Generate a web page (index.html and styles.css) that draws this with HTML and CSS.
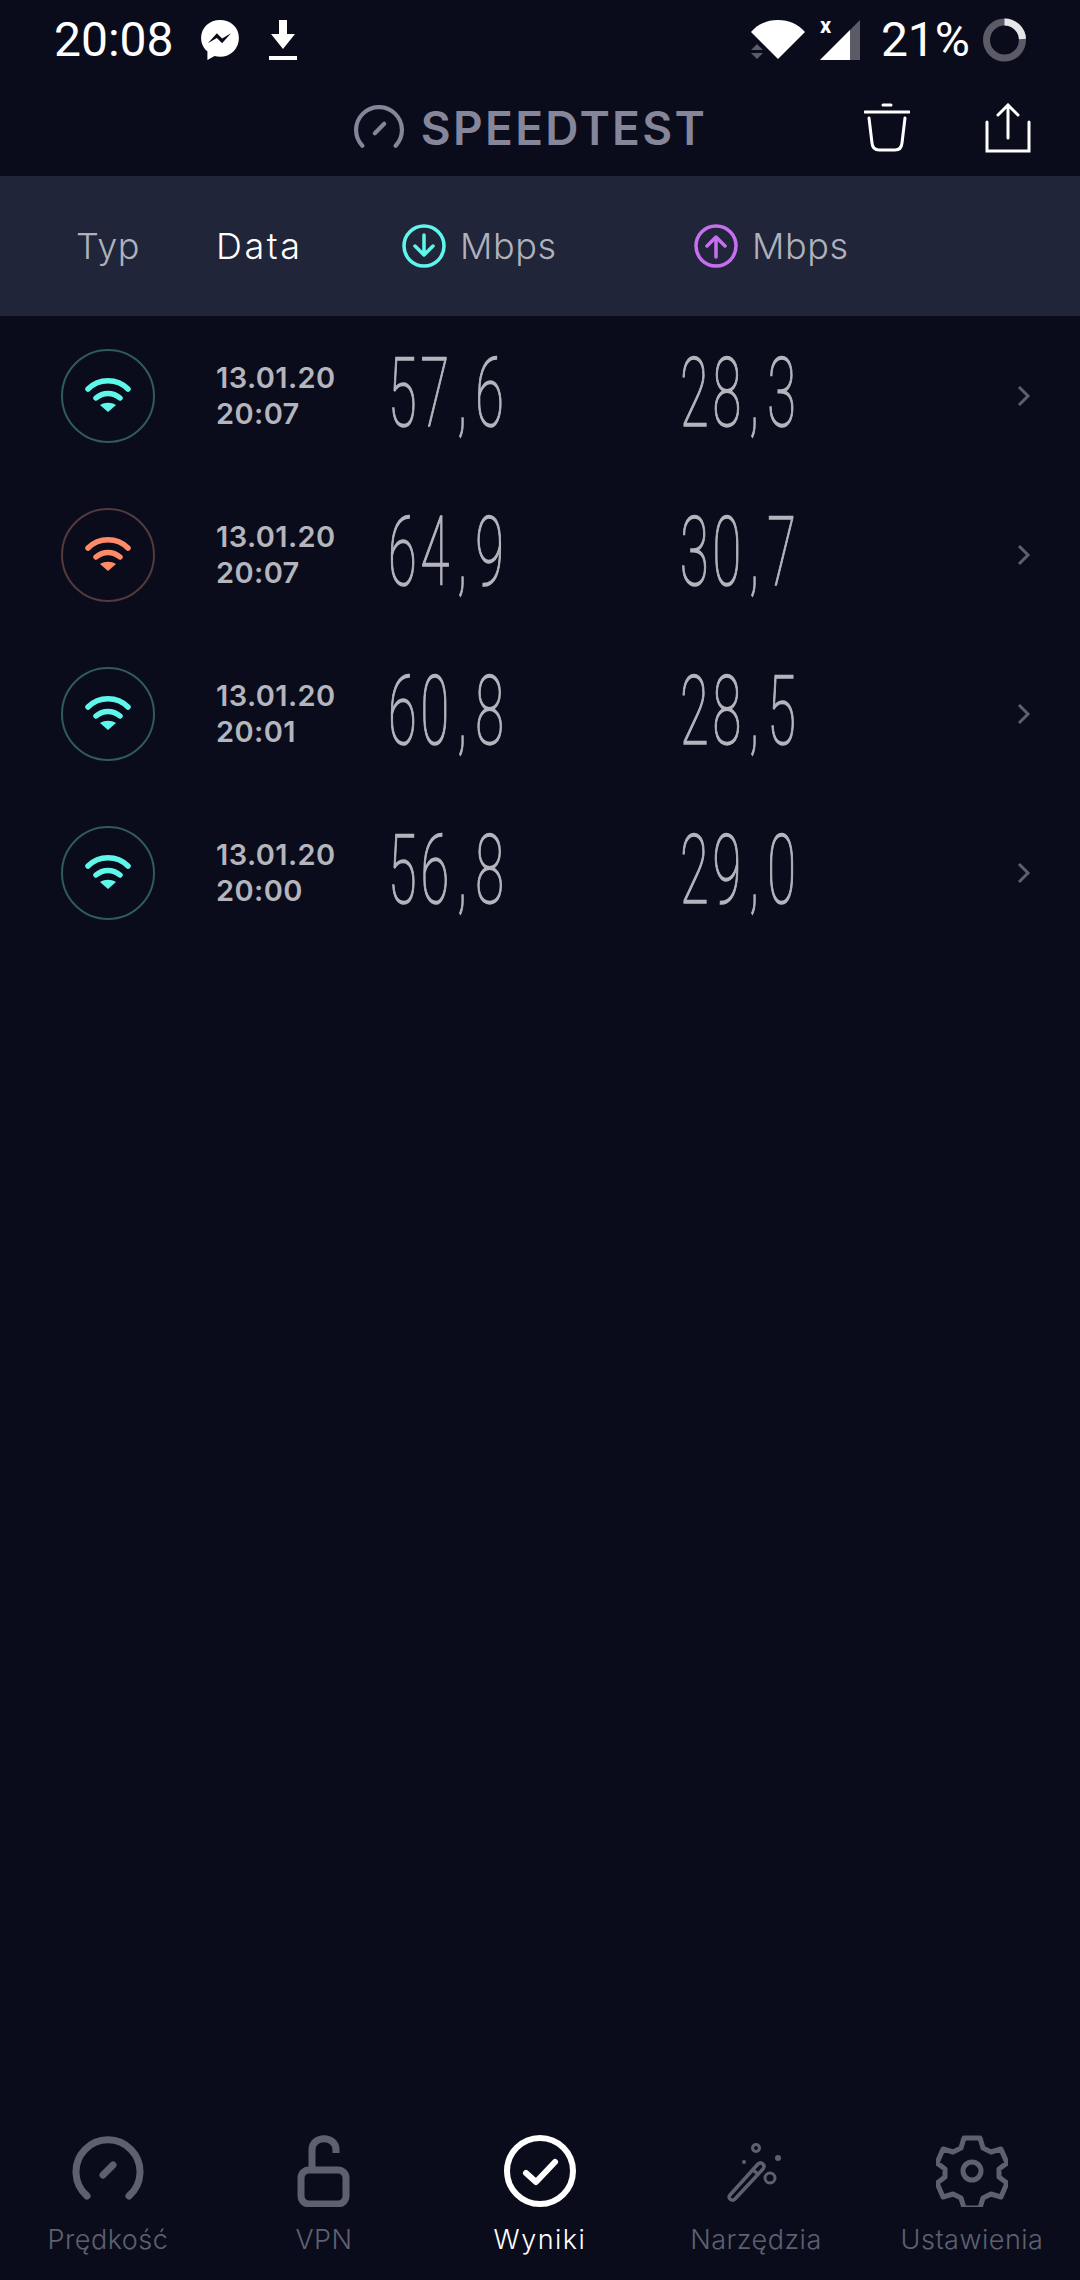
FILE: index.html
```html
<!DOCTYPE html>
<html lang="pl">
<head>
  <meta charset="UTF-8" />
  <meta name="viewport" content="width=device-width, initial-scale=1" />
  <title>Speedtest - Wyniki</title>
  <link rel="stylesheet" href="styles.css">
</head>
<body>
  <div class="app">
    <div class="statusbar">
      <div class="status-left">
        <span class="clock">20:08</span>
        <svg class="ic-msg" viewBox="0 0 38 40"><path d="M19 1C9 1 1 8.300 1 18c0 5.200 2.300 9.700 6 12.800V39l6.800-3.700c1.600.5 3.400.7 5.200.7 10 0 18-7.800 18-18S29 1 19 1z" fill="#fff"/><path d="M7.500 23l8.500-9.500 5 5 8.500-5-8.500 9.500-5-5z" fill="#0a0c1c"/></svg>
        <svg class="ic-dl" viewBox="0 0 28 40"><path d="M10 0h8v14h8L14 29 2 14h8z" fill="#fff"/><rect y="36" width="28" height="4" fill="#fff"/></svg>
      </div>
      <div class="status-right">
        <svg class="ic-wifi" viewBox="0 0 54 42"><path d="M27 40L0 13C7 5 16 1 27 1s20 4 27 12z" fill="#fff"/><path d="M0 31l6-6 6 6zM0 34h12l-6 6z" fill="#5a5b66"/></svg>
        <div class="sig">
          <span class="sig-x">x</span>
          <svg class="ic-sig" viewBox="0 0 40 40"><path d="M40 0v40H0z" fill="#5a5b66"/><path d="M30 10v30H0z" fill="#fff"/></svg>
        </div>
        <span class="batt">21%</span>
        <svg class="ic-batt" viewBox="0 0 44 46"><circle cx="22" cy="23" r="18" fill="none" stroke="#5a5b66" stroke-width="7"/><path d="M22 5a18 18 0 0 1 18 17" fill="none" stroke="#fff" stroke-width="7" opacity=".85"/></svg>
      </div>
    </div>

    <header class="topbar">
      <div class="brand">
        <svg class="ic-gauge" viewBox="0 0 48 44"><path d="M8 39A22 22 0 1 1 40 39" fill="none" stroke="#858699" stroke-width="4" stroke-linecap="round"/><path d="M20 27l9-9" fill="none" stroke="#858699" stroke-width="4" stroke-linecap="round"/></svg>
        <span>SPEEDTEST</span>
      </div>
      <div class="top-actions">
        <svg class="ic-trash" viewBox="0 0 46 50"><path d="M1 9h44M19 2h8" fill="none" stroke="#fff" stroke-width="3" stroke-linecap="round"/><path d="M5 15l3 25c.5 5 3 7 7 7h16c4 0 6.500-2 7-7l3-25" fill="none" stroke="#fff" stroke-width="3" stroke-linecap="round"/></svg>
        <svg class="ic-share" viewBox="0 0 46 50"><path d="M2 19v29h42V19M23 35V3M13 12l10-10 10 10" fill="none" stroke="#fff" stroke-width="3" stroke-linecap="round"/></svg>
      </div>
    </header>

    <div class="thead">
      <span class="col-type">Typ</span>
      <span class="col-date">Data</span>
      <span class="col-speed"><svg class="ic-dir" viewBox="0 0 44 44"><circle cx="22" cy="22" r="20" fill="none" stroke="#5ef7ea" stroke-width="3.500"/><path d="M22 11v20M13 22l9 9 9-9" fill="none" stroke="#5ef7ea" stroke-width="3.500" stroke-linecap="round" stroke-linejoin="round"/></svg>Mbps</span>
      <span class="col-speed"><svg class="ic-dir" viewBox="0 0 44 44"><circle cx="22" cy="22" r="20" fill="none" stroke="#c76ff0" stroke-width="3.500"/><path d="M22 33V13M13 22l9-9 9 9" fill="none" stroke="#c76ff0" stroke-width="3.500" stroke-linecap="round" stroke-linejoin="round"/></svg>Mbps</span>
    </div>

    <main class="rows">
      <div class="row">
        <div class="type-cell"><div class="type-ring ring-teal"><svg class="ic-signal" viewBox="0 0 46 36"><path d="M3 12C14 1 32 1 43 12M11 21c7-6 17-6 24 0" fill="none" stroke="currentColor" stroke-width="5.500" stroke-linecap="round"/><path d="M23 35l-8-7c5-3 11-3 16 0z" fill="currentColor"/></svg></div></div>
        <div class="date-cell">13.01.20<br>20:07</div>
        <div class="num-cell"><span class="num">57<span class="comma">,</span>6</span></div>
        <div class="num-cell"><span class="num">28<span class="comma">,</span>3</span></div>
        <svg class="chev" viewBox="0 0 14 22"><path d="M2 2l9 9-9 9" fill="none" stroke="#5d5f70" stroke-width="3"/></svg>
      </div>
      <div class="row">
        <div class="type-cell"><div class="type-ring ring-orange"><svg class="ic-signal" viewBox="0 0 46 36"><path d="M3 12C14 1 32 1 43 12M11 21c7-6 17-6 24 0" fill="none" stroke="currentColor" stroke-width="5.500" stroke-linecap="round"/><path d="M23 35l-8-7c5-3 11-3 16 0z" fill="currentColor"/></svg></div></div>
        <div class="date-cell">13.01.20<br>20:07</div>
        <div class="num-cell"><span class="num">64<span class="comma">,</span>9</span></div>
        <div class="num-cell"><span class="num">30<span class="comma">,</span>7</span></div>
        <svg class="chev" viewBox="0 0 14 22"><path d="M2 2l9 9-9 9" fill="none" stroke="#5d5f70" stroke-width="3"/></svg>
      </div>
      <div class="row">
        <div class="type-cell"><div class="type-ring ring-teal"><svg class="ic-signal" viewBox="0 0 46 36"><path d="M3 12C14 1 32 1 43 12M11 21c7-6 17-6 24 0" fill="none" stroke="currentColor" stroke-width="5.500" stroke-linecap="round"/><path d="M23 35l-8-7c5-3 11-3 16 0z" fill="currentColor"/></svg></div></div>
        <div class="date-cell">13.01.20<br>20:01</div>
        <div class="num-cell"><span class="num">60<span class="comma">,</span>8</span></div>
        <div class="num-cell"><span class="num">28<span class="comma">,</span>5</span></div>
        <svg class="chev" viewBox="0 0 14 22"><path d="M2 2l9 9-9 9" fill="none" stroke="#5d5f70" stroke-width="3"/></svg>
      </div>
      <div class="row">
        <div class="type-cell"><div class="type-ring ring-teal"><svg class="ic-signal" viewBox="0 0 46 36"><path d="M3 12C14 1 32 1 43 12M11 21c7-6 17-6 24 0" fill="none" stroke="currentColor" stroke-width="5.500" stroke-linecap="round"/><path d="M23 35l-8-7c5-3 11-3 16 0z" fill="currentColor"/></svg></div></div>
        <div class="date-cell">13.01.20<br>20:00</div>
        <div class="num-cell"><span class="num">56<span class="comma">,</span>8</span></div>
        <div class="num-cell"><span class="num">29<span class="comma">,</span>0</span></div>
        <svg class="chev" viewBox="0 0 14 22"><path d="M2 2l9 9-9 9" fill="none" stroke="#5d5f70" stroke-width="3"/></svg>
      </div>
    </main>

    <nav class="tabbar">
      <div class="tab">
        <svg class="tab-icon" viewBox="0 0 72 72"><path d="M15 61A32 32 0 1 1 57 61" fill="none" stroke="currentColor" stroke-width="7" stroke-linecap="round"/><path d="M31 40l10-10" fill="none" stroke="currentColor" stroke-width="7" stroke-linecap="round"/></svg>
        <span>Prędkość</span>
      </div>
      <div class="tab">
        <svg class="tab-icon" viewBox="0 0 72 72"><rect x="13" y="35" width="45" height="34" rx="8" fill="none" stroke="currentColor" stroke-width="7"/><path d="M24 35V15C24 0 48 0 48 15v3" fill="none" stroke="currentColor" stroke-width="7"/></svg>
        <span>VPN</span>
      </div>
      <div class="tab tab-active">
        <svg class="tab-icon" viewBox="0 0 72 72"><circle cx="36" cy="36" r="33" fill="none" stroke="currentColor" stroke-width="6"/><path d="M22 38l10 9 19-20" fill="none" stroke="currentColor" stroke-width="6" stroke-linecap="round" stroke-linejoin="round"/></svg>
        <span>Wyniki</span>
      </div>
      <div class="tab">
        <svg class="tab-icon" viewBox="0 0 72 72"><path d="M10 60l28-31c3-3 8 1 5 5L15 64c-3 3-8-1-5-4zM33 35l5 4" fill="none" stroke="currentColor" stroke-width="3.500" stroke-linejoin="round"/><circle cx="36" cy="13" r="3.500" fill="none" stroke="currentColor" stroke-width="3"/><circle cx="50" cy="43" r="5" fill="none" stroke="currentColor" stroke-width="3"/><circle cx="58" cy="23" r="3" fill="currentColor"/><circle cx="24" cy="27" r="2" fill="currentColor"/></svg>
        <span>Narzędzia</span>
      </div>
      <div class="tab">
        <svg class="tab-icon" viewBox="0 0 72 72"><path d="M28 3h16l3 10 8 4 10-3 6 14-8 6v8l8 6-6 14-10-3-8 4-3 10H28l-3-10-8-4-10 3-6-14 8-6v-8l-8-6 6-14 10 3 8-4z" fill="none" stroke="currentColor" stroke-width="5" stroke-linejoin="round"/><circle cx="36" cy="36" r="9" fill="none" stroke="currentColor" stroke-width="5"/></svg>
        <span>Ustawienia</span>
      </div>
    </nav>
  </div>
</body>
</html>
```

FILE: styles.css
```css
* {
  box-sizing: border-box;
}
html, body {
  margin: 0;
  padding: 0;
}
body {
  font-family: Inter, "Open Sans", sans-serif;
  background-color: #0a0c1c;
  color: #fff;
}
svg {
  display: block;
  flex: none;
}
.app {
  width: 1080px;
  height: 2280px;
  display: flex;
  flex-direction: column;
  overflow: hidden;
}

/* status bar */
.statusbar {
  height: 80px;
  display: flex;
  justify-content: space-between;
  align-items: center;
  padding: 0 53px 0 54px;
}
.status-left, .status-right {
  display: flex;
  align-items: center;
}
.clock, .batt {
  font-family: Roboto, sans-serif;
  font-size: 48px;
  line-height: 1;
}
.ic-msg {
  width: 40px;
  height: 42px;
  margin-left: 26px;
}
.ic-dl {
  width: 30px;
  height: 40px;
  margin-left: 28px;
}
.ic-wifi {
  width: 54px;
  height: 42px;
}
.sig {
  width: 40px;
  height: 40px;
  margin-left: 15px;
  position: relative;
}
.sig-x {
  position: absolute;
  left: 0;
  top: -7px;
  font-family: Roboto, sans-serif;
  font-size: 22px;
  font-weight: 700;
}
.ic-sig {
  width: 40px;
  height: 40px;
}
.batt {
  margin-left: 21px;
}
.ic-batt {
  width: 45px;
  height: 46px;
  margin-left: 12px;
}

/* top bar */
.topbar {
  height: 96px;
  position: relative;
  display: flex;
  justify-content: center;
  align-items: center;
}
.brand {
  display: flex;
  align-items: center;
  gap: 17px;
  margin-right: 19px;
  color: #858699;
  font-size: 46px;
  font-weight: 600;
  letter-spacing: 2.300px;
}
.ic-gauge {
  width: 50px;
  height: 46px;
}
.top-actions {
  position: absolute;
  right: 49px;
  top: 23px;
  display: flex;
  gap: 75px;
}
.ic-trash, .ic-share {
  width: 46px;
  height: 50px;
}

/* table head */
.thead {
  height: 140px;
  background-color: #20253a;
  display: grid;
  grid-template-columns: 216px 186px 292px 292px;
  align-items: center;
  font-size: 36px;
  font-weight: 300;
  letter-spacing: 0.6px;
  color: #b0b1bb;
}
.col-type {
  padding-left: 76px;
}
.col-date {
  color: #fff;
  letter-spacing: 2.500px;
}
.col-speed {
  display: flex;
  align-items: center;
  gap: 14px;
}
.ic-dir {
  width: 44px;
  height: 44px;
}

/* rows */
.rows {
  flex: 1;
}
.row {
  height: 159px;
  display: grid;
  grid-template-columns: 216px 174px 292px 292px 1fr;
  align-items: center;
}
.type-cell {
  display: flex;
  justify-content: center;
}
.type-ring {
  width: 94px;
  height: 94px;
  border-radius: 50%;
  display: flex;
  align-items: center;
  justify-content: center;
  border: 2px solid;
}
.ring-teal {
  color: #5ef7ea;
  border-color: #2f5a60;
}
.ring-orange {
  color: #ff8a68;
  border-color: #55393c;
}
.ic-signal {
  width: 46px;
  height: 36px;
  margin-top: -2px;
}
.date-cell {
  font-size: 29px;
  font-weight: 600;
  line-height: 36px;
  letter-spacing: 0.4px;
  color: #b4b5bd;
}
.num-cell {
  height: 90px;
  margin-top: -5px;
}
.num {
  display: inline-block;
  font-family: Roboto, sans-serif;
  font-weight: 100;
  font-size: 97px;
  line-height: 90px;
  letter-spacing: 7px;
  margin-left: -2px;
  color: #b4b5bd;
  -webkit-text-stroke: 1.5px #b4b5bd;
  transform: scaleX(0.54);
  transform-origin: left center;
  white-space: nowrap;
}
.comma {
  padding: 0 8px 0 8px;
}
.chev {
  width: 14px;
  height: 22px;
  margin-left: 43px;
}

/* bottom tabs */
.tabbar {
  height: 152px;
  display: grid;
  grid-template-columns: repeat(5, 216px);
  padding-top: 7px;
}
.tab {
  display: flex;
  flex-direction: column;
  align-items: center;
  color: #5e6070;
  font-size: 27px;
  font-weight: 300;
  letter-spacing: 0.5px;
}
.tab span {
  margin-top: 16px;
}
.tab-active {
  color: #fff;
  letter-spacing: 1.500px;
}
.tab-icon {
  width: 72px;
  height: 72px;
}
```
